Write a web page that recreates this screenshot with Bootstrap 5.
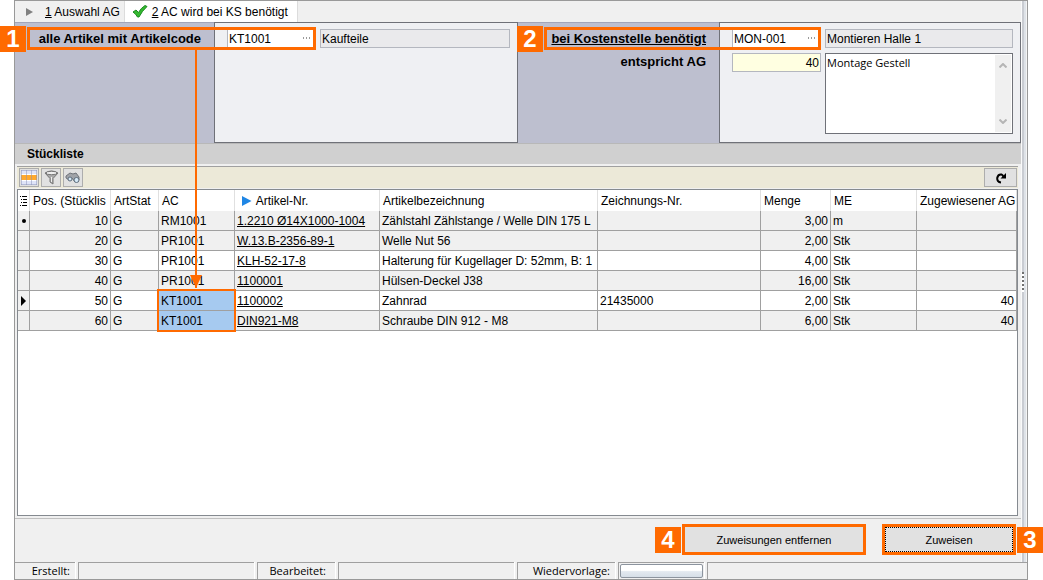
<!DOCTYPE html>
<html lang="de">
<head>
<meta charset="utf-8">
<meta name="viewport" content="width=device-width, initial-scale=1">
<title>AC wird bei KS benötigt</title>
<link href="https://cdn.jsdelivr.net/npm/bootstrap@5.3.0/dist/css/bootstrap.min.css" rel="stylesheet">
<style>
:root { --orange: #ff6a00; --line: #a0a0a0; --edge: #6f7178; }
body { font: 12px/16px "Liberation Sans", Arial, sans-serif; color: #000; background: #fff; }
a, a:hover { color: #000; }
.window { margin: 0 15px 0 14px; min-height: 100vh; background: #f0f0f0; border: 1px solid #999; }
.main-pane { min-width: 0; }
.tabs { height: 21px; }
.tab { font-size: 12px; line-height: 16px; border: 0; border-right: 1px solid #dcdcdc; background: #f0f0f0; padding: 3px 4px 0 10px; }
.tab.current { background: #fff; padding: 3px 9px 0 7px; }
.splitter { width: 6px; flex: none; background: linear-gradient(90deg, #fafafa 0 1px, #c9ccd2 1px 3px, #dfe3e8 3px 5px, #f4f4f4 5px); }
.grip { width: 2px; height: 20px; margin-left: 1px; background: repeating-linear-gradient(#707070 0 2px, #fff 2px 4px); }

.group { flex: 1 1 0; }
.label-panel { width: 199px; flex: none; background: #bdbfcf; border-top: 1px solid #a2a5b8; padding: 6px 13px 0 0; font-size: 13px; font-weight: 700; text-align: right; }
.label-panel.cost { width: 201px; }
.label-panel label { display: block; line-height: 19px; margin-bottom: 4px; white-space: nowrap; }
.field-panel { background: #eff0f3; border: 1px solid var(--edge); padding: 6px 7px 8px 12px; display: grid; grid-template-columns: 89px 1fr; grid-template-rows: 19px 81px; gap: 5px 4px; min-width: 0; }
.box { font-size: 12px; line-height: 16px; height: 19px; width: 100%; border: 1px solid #b4b7bf; border-radius: 0; padding: 0 1px; background: #fff; color: #000; display: block; }
.box.locked { background: #eaeaec; }
.box.number { background: #ffffe1; text-align: right; }
.note { font: 11px/16px "Open Sans", sans-serif; height: 81px; border-color: var(--edge); resize: none; padding: 1px; overflow: hidden; }
.more { right: 5px; top: 8px; width: 8px; height: 2px; background: repeating-linear-gradient(90deg, #999 0 1px, transparent 1px 3px); }
.scroll { right: 2px; top: 2px; bottom: 2px; width: 16px; background: #f0f0f0; }

.marker { width: 26px; height: 26px; background: var(--orange); color: #fff; font-size: 24px; line-height: 26px; font-weight: 700; text-align: center; z-index: 4; }
.frame { border: 3px solid var(--orange); pointer-events: none; z-index: 3; }
.frame-field { top: 5px; height: 23px; }
.frame-code { left: 12px; width: 289px; }
.frame-cost { left: 26px; width: 277px; }
.marker-field { top: 4px; }
.marker-code { left: -15px; }
.marker-cost { left: -1px; }
.marker-left { left: -27px; top: 3px; }
.marker-right { right: -27px; top: 3px; }
.arrow { left: 180px; top: 28px; width: 2px; height: 238px; background: var(--orange); z-index: 3; }
.arrow::after { content: ""; position: absolute; left: -5px; bottom: 0; border: 6px solid transparent; border-top: 13px solid var(--orange); border-bottom: 0; }

.caption-bar { height: 21px; background: #d0d0d0; border-top: 1px solid #b8b8b8; padding: 2px 12px; font-size: 12px; line-height: 16px; font-weight: 700; margin: 0; }
.list-area { padding: 2px 3px 0 2px; }
.toolbar { height: 22px; border-top: 1px solid var(--line); background: #ece9d8; padding: 1px 1px 0 2px; gap: 2px; }
.tool { width: 20px; height: 19px; border: 1px solid #adadad; background: #e1e1e1; padding: 0; display: flex; align-items: center; justify-content: center; }
.tool.wide { width: 33px; }

.grid-box { background: #fff; border: 1px solid #858a90; margin-top: 1px; }
.grid-table { table-layout: fixed; width: 100%; border-collapse: separate; border-spacing: 0; }
.grid-table th { height: 21px; padding: 0 2px 0 3px; font-weight: 400; border-right: 1px solid #e0e0e0; white-space: nowrap; overflow: hidden; }
.grid-table td { height: 20px; line-height: 16px; padding: 1px 2px; background: #fff; border: solid var(--line); border-width: 0 1px 1px 0; white-space: nowrap; overflow: hidden; }
.grid-table tr.shade td { background: #f0f0f0; }
.grid-table td:first-child { background: #f0f0f0; padding: 0; text-align: center; }
.grid-table td:first-child svg { display: block; margin: auto; }
.grid-table tr td.hit { background: #a6caf0; overflow: visible; }
.frame-hit { border-width: 2px; left: -2px; right: -2px; top: -2px; height: 43px; }
.c-mark { width: 12px; } .c-pos { width: 81px; } .c-stat { width: 48px; } .c-ac { width: 76px; } .c-nr { width: 145px; }
.c-draw { width: 163px; } .c-qty { width: 70px; } .c-unit { width: 86px; } .c-ag { width: 100px; }

.actions { border-top: 1px solid #c0c0c0; padding: 5px 5px 7px; gap: 16px; margin-top: 2px; }
.action { display: block; height: 31px; background: #e1e1e1; border: 3px solid var(--orange); font-size: 11px; padding: 0; }
.action span { display: block; line-height: 24px; height: 25px; border: 1px solid transparent; }
.action.preset span { border: 1px dotted #000; }
.w-remove { width: 184px; } .w-assign { width: 134px; }
.status { height: 17px; gap: 3px; font: 11px/15px "Open Sans", sans-serif; }
.cell { border: solid var(--line); border-width: 1px 0 0 1px; box-shadow: 1px 0 #fff; height: 17px; text-align: right; padding-right: 5px; white-space: nowrap; }
.cell:first-child { border-left: 0; }
.cell:last-child { box-shadow: none; }
.cell-created { width: 60px; } .cell-blank { width: 176px; } .cell-edited { width: 78px; padding-right: 9px; }
.cell-follow { width: 98px; } .cell-pill { width: 86px; padding: 1px; }
.pill { display: block; height: 14px; width: 100%; border: 1px solid #8c949e; border-radius: 2px; background: linear-gradient(#fff 0 45%, #e3e9f0 55%, #d6dfe8); padding: 0; }
</style>
</head>
<body>
<div class="window d-flex flex-column">
  <div class="d-flex flex-fill">
    <main class="main-pane d-flex flex-column flex-fill">
      <nav class="tabs d-flex">
        <button class="tab d-flex" type="button"><svg width="8" height="8" class="mt-1 me-2"><path d="M1 0L8 4L1 8Z" fill="#808080"/></svg><span class="ps-1"><u>1</u> Auswahl AG</span></button>
        <button class="tab current d-flex" type="button"><svg width="16" height="15" viewBox="0 0 16 15" class="me-1"><path d="M1 8L4 6L6.500 8.500Q9 4 13 1.500L15 2.500Q10 7 7 13H5.500Q4 10 1 8Z" fill="#35b930" stroke="#1a8a20"/></svg><span><u>2</u> AC wird bei KS benötigt</span></button>
      </nav>

      <form class="d-flex">
        <section class="group d-flex position-relative">
          <div class="label-panel"><label for="code">alle Artikel mit Artikelcode</label></div>
          <div class="field-panel flex-fill">
            <div class="position-relative"><input class="box" id="code" value="KT1001"><i class="more position-absolute"></i></div>
            <input class="box locked" value="Kaufteile" aria-label="Bezeichnung Artikelcode" readonly>
          </div>
          <span class="frame frame-field frame-code position-absolute"></span>
          <span class="marker marker-field marker-code position-absolute">1</span>
          <span class="arrow position-absolute"></span>
        </section>
        <section class="group d-flex position-relative">
          <div class="label-panel cost">
            <label for="ks"><u>bei Kostenstelle benötigt</u></label>
            <label for="ag">entspricht AG</label>
          </div>
          <div class="field-panel flex-fill">
            <div class="position-relative"><input class="box" id="ks" value="MON-001"><i class="more position-absolute"></i></div>
            <input class="box locked" value="Montieren Halle 1" aria-label="Bezeichnung Kostenstelle" readonly>
            <input class="box number" id="ag" value="40">
            <div class="position-relative">
              <textarea class="box note" aria-label="Bezeichnung AG">Montage Gestell</textarea>
              <span class="scroll position-absolute d-flex flex-column justify-content-between align-items-center py-2">
                <svg width="8" height="5"><path d="M0.5 4.5L4 1L7.5 4.5" fill="none" stroke="#b5b5b5" stroke-width="2"/></svg>
                <svg width="8" height="5"><path d="M0.5 0.5L4 4L7.5 0.5" fill="none" stroke="#b5b5b5" stroke-width="2"/></svg>
              </span>
            </div>
          </div>
          <span class="frame frame-field frame-cost position-absolute"></span>
          <span class="marker marker-field marker-cost position-absolute">2</span>
        </section>
      </form>

      <h2 class="caption-bar">Stückliste</h2>
      <div class="list-area d-flex flex-column flex-fill">
        <div class="toolbar d-flex">
          <button class="tool" type="button" aria-label="Spalten"><svg width="16" height="15"><path fill="#fff" d="M0 0h16v15H0z"/><path fill="#dfe4f8" d="M0 0h16v4H0zM0 11h16v4H0z"/><path fill="#ffa92e" d="M0 5h16v5H0z"/><path d="M0 .5h16M0 14.5h16M.5 0v15M5.5 0v15M10.500 0v15M15.500 0v15" stroke="#8991b5" stroke-opacity=".5"/></svg></button>
          <button class="tool" type="button" aria-label="Filter"><svg width="15" height="15"><path d="M1 3Q7.500-1 14 3L9 8.500V14L6 12V8.500Z" fill="#a9a9a9" stroke="#777"/><ellipse cx="7.500" cy="3" rx="5.500" ry="1.700" fill="#eee" stroke="#777"/><path d="M7.500 7v5" stroke="#eee"/></svg></button>
          <button class="tool me-auto" type="button" aria-label="Suchen"><svg width="16" height="12"><path d="M1 4L5 1L8 2L11 1L14 5V8L10 10L7 6L4 8L1 6Z" fill="#a0a3a8" stroke="#70747a"/><circle cx="5" cy="7" r="2" fill="#d5e8f6" stroke="#5d6c7b"/><circle cx="11.500" cy="8" r="2.500" fill="#d5e8f6" stroke="#5d6c7b"/></svg></button>
          <button class="tool wide" type="button" aria-label="Aktualisieren"><svg width="12" height="12"><path d="M6 10.500Q2 10 2.200 6Q3 2 6.500 2.500Q8 3 8.500 5" fill="none" stroke="#000" stroke-width="2"/><path d="M11 1V6.500H5.500Z"/></svg></button>
        </div>
        <div class="grid-box flex-fill">
          <table class="grid-table">
            <colgroup><col class="c-mark"><col class="c-pos"><col class="c-stat"><col class="c-ac"><col class="c-nr"><col><col class="c-draw"><col class="c-qty"><col class="c-unit"><col class="c-ag"></colgroup>
            <thead><tr>
              <th class="p-0"><svg width="8" height="10" class="d-block mx-auto"><path d="M2 .5h5M3 3.500h4M3 6.500h4M2 9.500h5M0 .5h1M1 3.500h1M1 6.500h1M0 9.500h1" stroke="#000"/></svg></th>
              <th>Pos. (Stücklis</th><th>ArtStat</th><th>AC</th>
              <th><svg width="11" height="10" class="ms-1" style="vertical-align:-1px"><path d="M0 0L9.500 5L0 10Z" fill="#1f86e5"/></svg> Artikel-Nr.</th>
              <th>Artikelbezeichnung</th><th>Zeichnungs-Nr.</th><th>Menge</th><th>ME</th><th>Zugewiesener AG</th>
            </tr></thead>
            <tbody>
              <tr class="shade"><td><svg width="4" height="4"><circle cx="2" cy="2" r="2"/></svg></td><td class="text-end">10</td><td>G</td><td>RM1001</td><td><a href="#">1.2210 Ø14X1000-1004</a></td><td>Zählstahl Zählstange / Welle DIN 175 L</td><td></td><td class="text-end">3,00</td><td>m</td><td></td></tr>
              <tr class="shade"><td></td><td class="text-end">20</td><td>G</td><td>PR1001</td><td><a href="#">W.13.B-2356-89-1</a></td><td>Welle Nut 56</td><td></td><td class="text-end">2,00</td><td>Stk</td><td></td></tr>
              <tr><td></td><td class="text-end">30</td><td>G</td><td>PR1001</td><td><a href="#">KLH-52-17-8</a></td><td>Halterung für Kugellager D: 52mm, B: 1</td><td></td><td class="text-end">4,00</td><td>Stk</td><td></td></tr>
              <tr class="shade"><td></td><td class="text-end">40</td><td>G</td><td>PR1001</td><td><a href="#">1100001</a></td><td>Hülsen-Deckel J38</td><td></td><td class="text-end">16,00</td><td>Stk</td><td></td></tr>
              <tr><td><svg width="5" height="10"><path d="M0 0L5 5L0 10Z"/></svg></td><td class="text-end">50</td><td>G</td><td class="hit position-relative">KT1001<span class="frame frame-hit position-absolute"></span></td><td><a href="#">1100002</a></td><td>Zahnrad</td><td>21435000</td><td class="text-end">2,00</td><td>Stk</td><td class="text-end">40</td></tr>
              <tr class="shade"><td></td><td class="text-end">60</td><td>G</td><td class="hit">KT1001</td><td><a href="#">DIN921-M8</a></td><td>Schraube DIN 912 - M8</td><td></td><td class="text-end">6,00</td><td>Stk</td><td class="text-end">40</td></tr>
            </tbody>
          </table>
        </div>
      </div>

      <div class="actions d-flex justify-content-end">
        <div class="position-relative"><span class="marker marker-left position-absolute">4</span><button class="action w-remove" type="button"><span>Zuweisungen entfernen</span></button></div>
        <div class="position-relative"><button class="action preset w-assign" type="button"><span>Zuweisen</span></button><span class="marker marker-right position-absolute">3</span></div>
      </div>
    </main>
    <div class="splitter d-flex align-items-center"><div class="grip"></div></div>
  </div>

  <footer class="status d-flex">
    <div class="cell cell-created">Erstellt:</div>
    <div class="cell cell-blank"></div>
    <div class="cell cell-edited">Bearbeitet:</div>
    <div class="cell cell-blank"></div>
    <label class="cell cell-follow" for="wv">Wiedervorlage:</label>
    <div class="cell cell-pill"><button class="pill" id="wv" type="button"></button></div>
    <div class="cell flex-fill"></div>
  </footer>
</div>
<script src="https://cdn.jsdelivr.net/npm/bootstrap@5.3.0/dist/js/bootstrap.bundle.min.js"></script>
</body>
</html>
